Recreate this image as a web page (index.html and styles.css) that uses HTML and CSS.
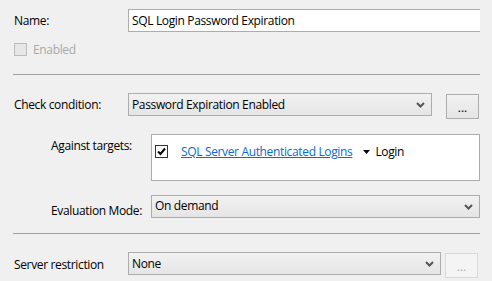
FILE: index.html
```html
<!DOCTYPE html>
<html lang="en">
<head>
    <meta charset="UTF-8">
    <title>Policy properties</title>
    <link rel="stylesheet" href="styles.css">
</head>
<body>
    <div class="form">
        <div class="row">
            <label class="label">Name:</label>
            <div class="textbox">SQL Login Password Expiration</div>
        </div>

        <div class="row check-row">
            <span class="checkbox disabled"></span>
            <span class="muted">Enabled</span>
        </div>

        <div class="separator"></div>

        <div class="row row-cond">
            <label class="label">Check condition:</label>
            <div class="select select-cond">
                <span>Password Expiration Enabled</span>
                <svg class="chevron" width="9" height="6" viewBox="0 0 9 6"><polyline points="1,1 4.5,4.5 8,1" fill="none" stroke="#555" stroke-width="2"/></svg>
            </div>
            <button class="dots">...</button>
        </div>

        <div class="row row-targets">
            <label class="label sub">Against targets:</label>
            <div class="targets">
                <div class="target">
                    <span class="checkbox checked">
                        <svg width="11" height="11" viewBox="0 0 11 11"><polyline points="2,5.5 4.5,8 9,2.5" fill="none" stroke="#000" stroke-width="2"/></svg>
                    </span>
                    <a href="#" class="link">SQL Server Authenticated Logins</a>
                    <svg class="arrow" width="7" height="4" viewBox="0 0 7 4"><polygon points="0,0 7,0 3.5,4" fill="#000"/></svg>
                    <span>Login</span>
                </div>
            </div>
        </div>

        <div class="row row-eval">
            <label class="label sub">Evaluation Mode:</label>
            <div class="select select-eval">
                <span>On demand</span>
                <svg class="chevron" width="9" height="6" viewBox="0 0 9 6"><polyline points="1,1 4.5,4.5 8,1" fill="none" stroke="#555" stroke-width="2"/></svg>
            </div>
        </div>

        <div class="separator sep-2"></div>

        <div class="row row-server">
            <label class="label">Server restriction</label>
            <div class="select select-server">
                <span>None</span>
                <svg class="chevron" width="9" height="6" viewBox="0 0 9 6"><polyline points="1,1 4.5,4.5 8,1" fill="none" stroke="#555" stroke-width="2"/></svg>
            </div>
            <button class="dots" disabled>...</button>
        </div>
    </div>
</body>
</html>
```

FILE: styles.css
```css
body {
    margin: 0;
    background-color: #f0f0f0;
    font-family: "Open Sans", "Noto Sans", sans-serif;
    font-size: 12px;
    letter-spacing: -0.35px;
    color: #000;
}
.form {
    width: 466px;
    padding: 9px 0 0 14px;
}
.row {
    display: flex;
    align-items: flex-start;
}
.label {
    width: 114px;
    flex: none;
    padding-top: 3px;
}
.label.sub {
    width: 100px;
    margin-left: 37px;
}
.textbox {
    flex: 1;
    height: 21px;
    background: white;
    border: 1px solid #acacac;
    border-right: none;
    padding: 0 3px;
    line-height: 21px;
}
.check-row {
    margin-top: 11px;
    align-items: center;
    height: 13px;
}
.checkbox {
    display: inline-flex;
    align-items: center;
    justify-content: center;
    width: 11px;
    height: 11px;
    border: 1px solid #333;
    background: white;
    flex: none;
}
.checkbox.disabled {
    background: #e6e6e6;
    border-color: #bcbcbc;
}
.muted {
    color: #a8a8a8;
    margin-left: 6px;
}
.separator {
    height: 1px;
    background: #a0a0a0;
    margin: 18px 0 0 -1px;
    width: 467px;
}
.select {
    height: 21px;
    border: 1px solid #acacac;
    background: linear-gradient(#f2f2f2, #e5e5e5);
    display: flex;
    align-items: center;
    justify-content: space-between;
    padding: 0 6px 0 3px;
    box-sizing: content-box;
}
.chevron {
    flex: none;
}
.row-cond {
    margin-top: 18px;
}
.select-cond {
    width: 293px;
}
.dots {
    margin: 1px 0 0 14px;
    width: 33px;
    height: 25px;
    border: 1px solid #acacac;
    background: linear-gradient(#f2f2f2, #e5e5e5);
    font-family: inherit;
    font-size: 12px;
    padding: 2px 0 0;
    color: #000;
}
.dots:disabled {
    border-color: #d9d9d9;
    background: #f4f4f4;
    color: #b0b0b0;
}
.row-targets {
    margin-top: 15px;
}
.targets {
    flex: 1;
    height: 45px;
    background: white;
    border: 1px solid #acacac;
}
.target {
    display: flex;
    align-items: center;
    padding: 8px 0 0 3px;
}
.checkbox.checked {
    border-color: #333;
}
.link {
    color: #0a6ad6;
    margin-left: 13px;
}
.arrow {
    margin: 0 5px 0 11px;
}
.row-eval {
    margin-top: 14px;
}
.row-eval .label {
    padding-top: 7px;
}
.select-eval {
    flex: 1;
    align-items: flex-start;
    padding-top: 0;
    height: 21px;
}
.select-eval span {
    margin-top: 1px;
}
.select-eval .chevron {
    margin-top: 8px;
}
.sep-2 {
    margin-top: 14px;
}
.row-server {
    margin-top: 18px;
}
.row-server .label {
    padding-top: 4px;
}
.select-server {
    width: 302px;
}
.row-server .dots {
    margin-left: 4px;
}
```
